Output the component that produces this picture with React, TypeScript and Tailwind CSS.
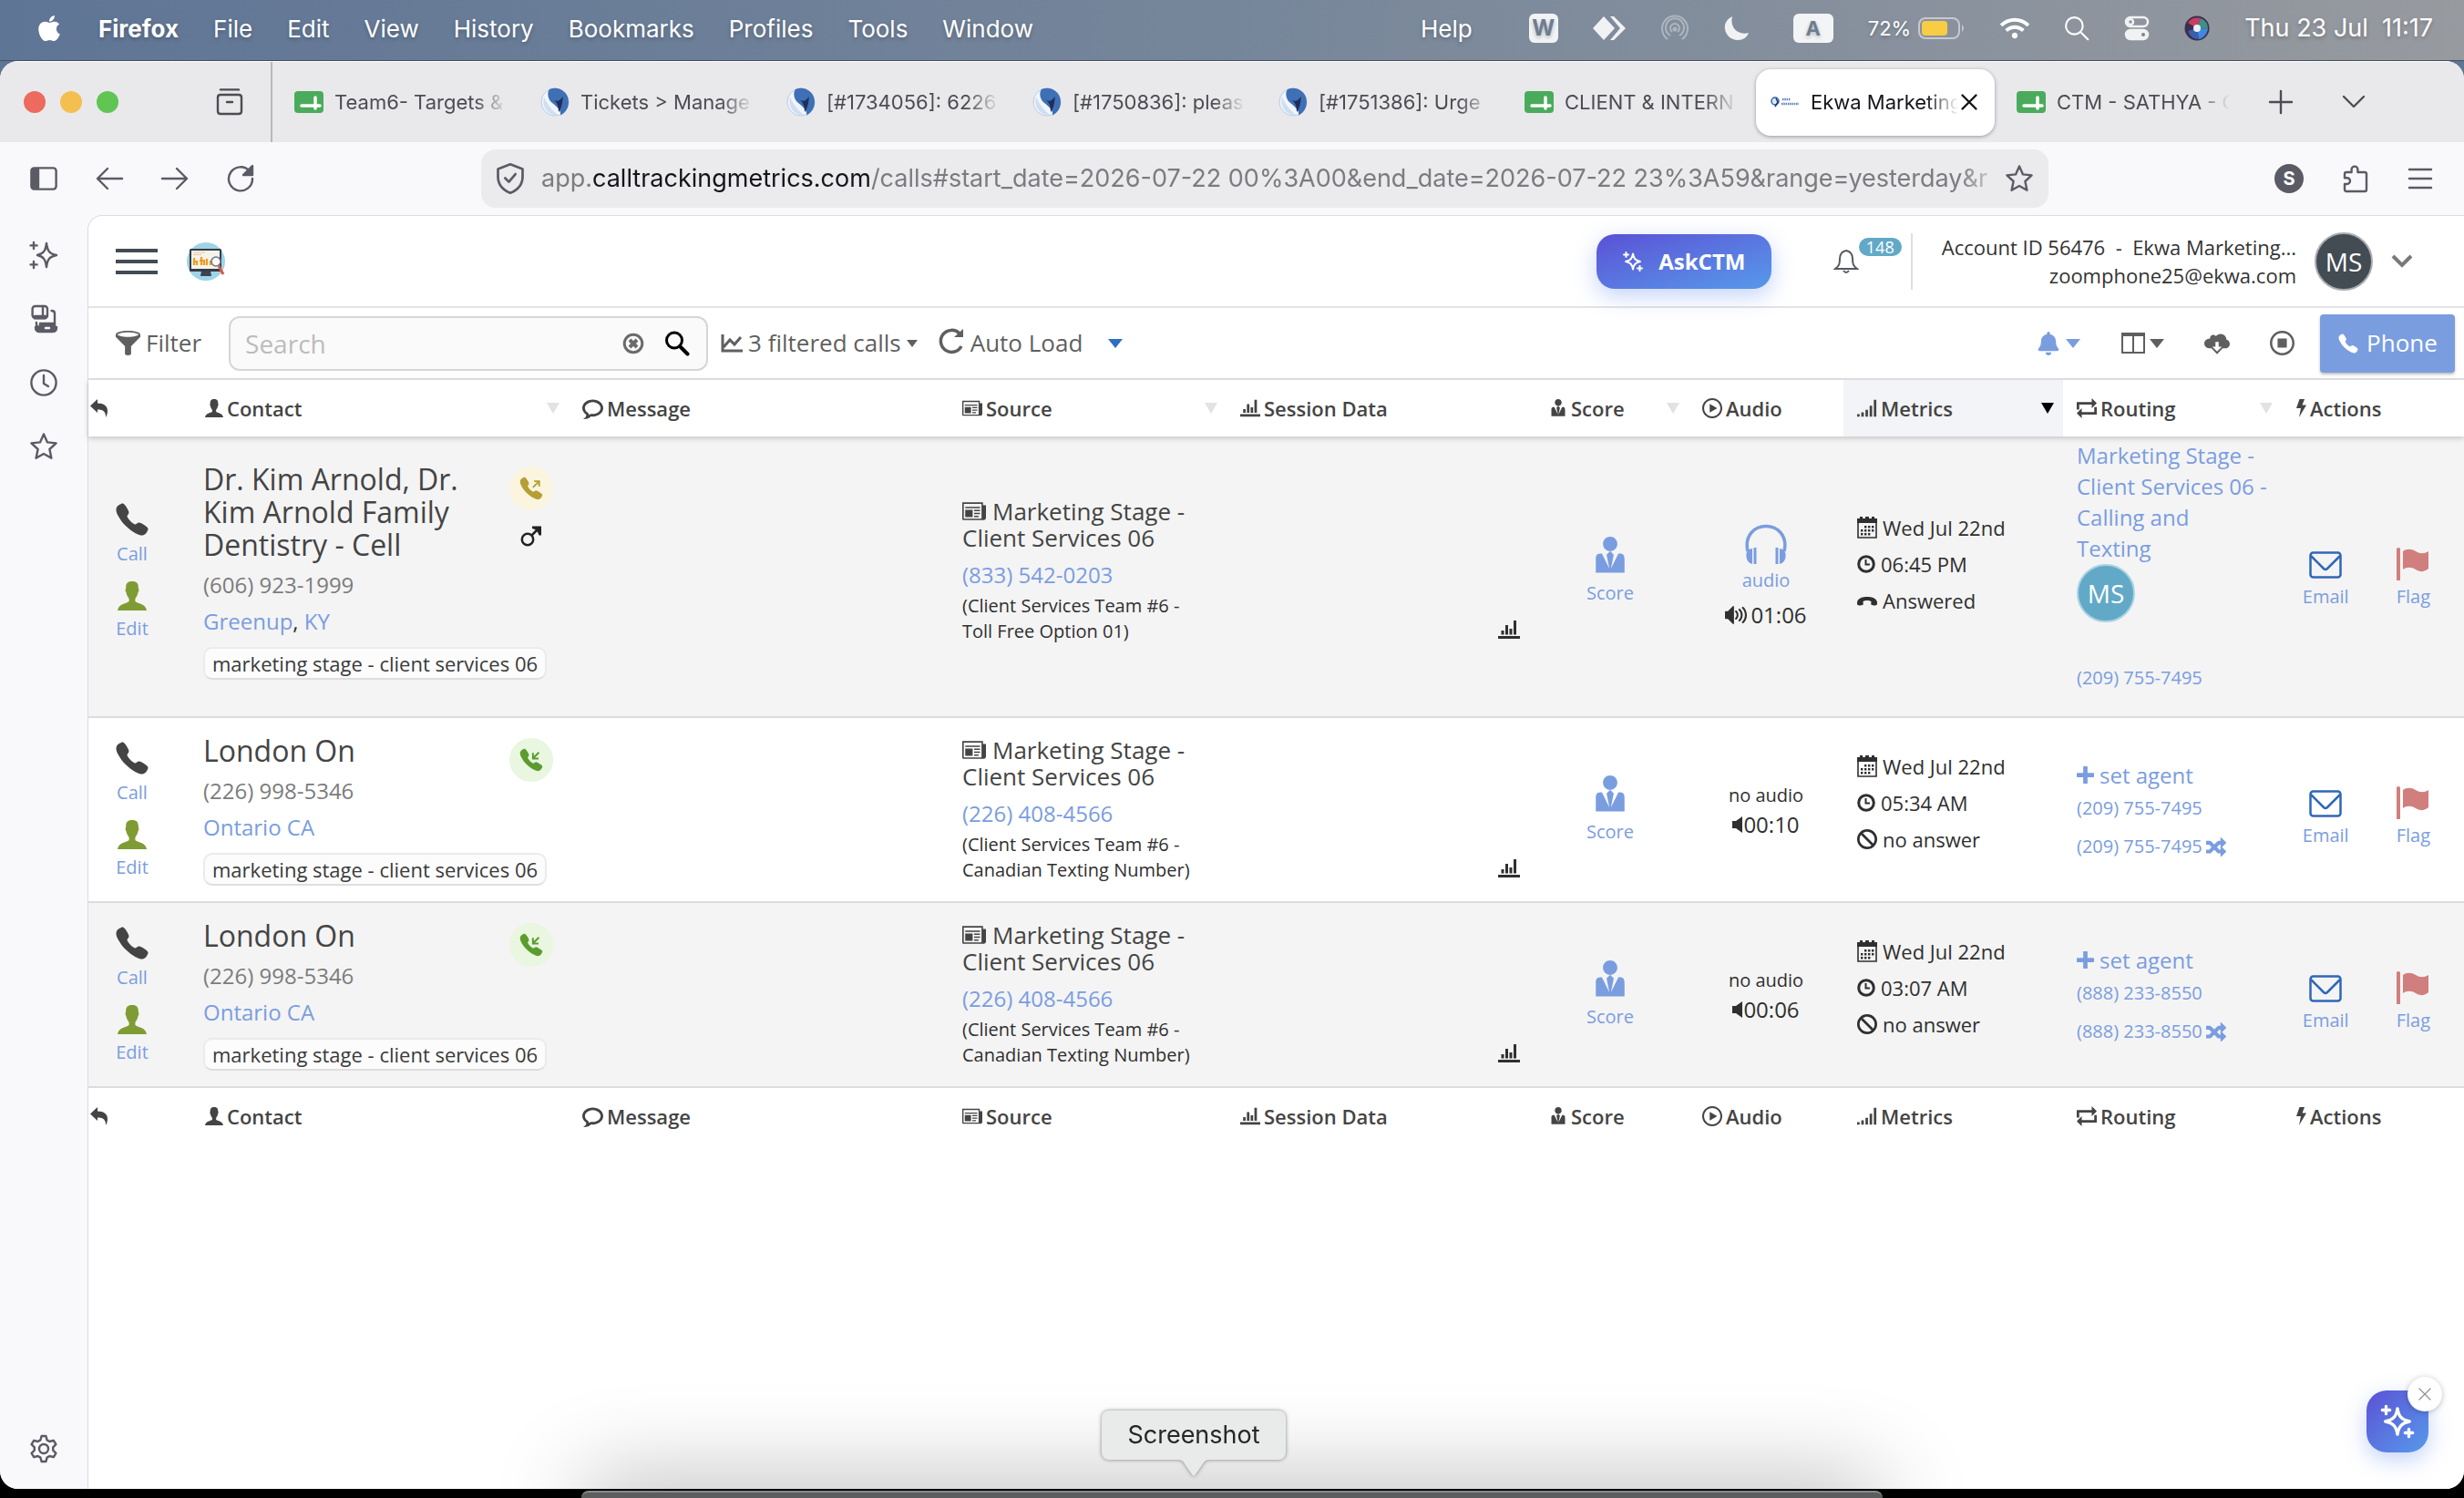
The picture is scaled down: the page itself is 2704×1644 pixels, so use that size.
import type { ReactNode } from 'react';
import {
  ImBlocked,
  ImBubble2,
  ImCloudDownload,
  ImFilter,
  ImLoop,
  ImNewspaper,
  ImPhoneHangUp,
  ImPlay2,
  ImPlus,
  ImShuffle,
  ImStop,
  ImUserTie,
  ImVolumeHigh,
} from 'react-icons/im';
import { IoCall } from 'react-icons/io5';
import { FaApple, FaBell, FaWifi } from 'react-icons/fa';

interface Call {
  id: number;
  name: string;
  phone: string;
  location: string[];
  direction: 'in' | 'out';
  male?: boolean;
  sourcePhone: string;
  sourceNote: string;
  audio: boolean;
  duration: string;
  time: string;
  answered: boolean;
  routing: string;
}

const calls: Call[] = [
  {
    id: 1,
    name: 'Dr. Kim Arnold, Dr. Kim Arnold Family Dentistry - Cell',
    phone: '(606) 923-1999',
    location: ['Greenup', 'KY'],
    direction: 'out',
    male: true,
    sourcePhone: '(833) 542-0203',
    sourceNote: '(Client Services Team #6 - Toll Free Option 01)',
    audio: true,
    duration: '01:06',
    time: '06:45 PM',
    answered: true,
    routing: '(209) 755-7495',
  },
  {
    id: 2,
    name: 'London On',
    phone: '(226) 998-5346',
    location: ['Ontario CA'],
    direction: 'in',
    sourcePhone: '(226) 408-4566',
    sourceNote: '(Client Services Team #6 - Canadian Texting Number)',
    audio: false,
    duration: '00:10',
    time: '05:34 AM',
    answered: false,
    routing: '(209) 755-7495',
  },
  {
    id: 3,
    name: 'London On',
    phone: '(226) 998-5346',
    location: ['Ontario CA'],
    direction: 'in',
    sourcePhone: '(226) 408-4566',
    sourceNote: '(Client Services Team #6 - Canadian Texting Number)',
    audio: false,
    duration: '00:06',
    time: '03:07 AM',
    answered: false,
    routing: '(888) 233-8550',
  },
];

const menus = ['File', 'Edit', 'View', 'History', 'Bookmarks', 'Profiles', 'Tools', 'Window'];

const tabs = [
  { title: 'Team6- Targets &', icon: 'sheet' },
  { title: 'Tickets > Manage', icon: 'ticket' },
  { title: '[#1734056]: 6226', icon: 'ticket' },
  { title: '[#1750836]: pleas', icon: 'ticket' },
  { title: '[#1751386]: Urge', icon: 'ticket' },
  { title: 'CLIENT & INTERN', icon: 'sheet' },
  { title: 'Ekwa Marketing', icon: 'ekwa', active: true },
  { title: 'CTM - SATHYA - C', icon: 'sheet' },
];

/* ---------- icons ---------- */

// 16-unit outline icon used all over the browser chrome
const Outline = ({ children, className = 'size-8' }: { children: ReactNode; className?: string }) => (
  <svg
    viewBox="0 0 16 16"
    className={className}
    fill="none"
    stroke="currentColor"
    strokeWidth="1.2"
    strokeLinecap="round"
    strokeLinejoin="round"
    aria-hidden="true"
  >
    {children}
  </svg>
);

const STAR = 'M8 1.2l2 4.5 4.8.5-3.6 3.3 1 4.9L8 12l-4.2 2.4 1-4.9L1.2 6.2 6 5.7z';

const Sparkle = ({ className = 'size-8' }: { className?: string }) => (
  <svg
    viewBox="0 0 24 24"
    className={className}
    fill="none"
    stroke="currentColor"
    strokeWidth="2"
    strokeLinecap="round"
    strokeLinejoin="round"
    aria-hidden="true"
  >
    <path d="M12 3.5c.8 5.2 2.6 7.4 8 8.5-5.4 1.1-7.2 3.3-8 8.5-.8-5.2-2.6-7.4-8-8.5 5.4-1.1 7.2-3.3 8-8.5zM4.500 2v5M2 4.500h5M19.500 17v5M17 19.500h5" />
  </svg>
);

const UserIcon = ({ className }: { className: string }) => (
  <svg viewBox="0 0 32 32" className={className} fill="currentColor" aria-hidden="true">
    <path d="M16 0c5.200 0 6.800 2.600 6.800 6.500 0 1.500.5 1.600.6 3 .1 1.300-.8 2-1 3.200-.5 3-2 4.500-3 6.300v3c2 2.200 11.600 2.500 12.600 10H0c1-7.500 10.600-7.800 12.600-10v-3c-1-1.800-2.500-3.300-3-6.300-.2-1.200-1.100-1.900-1-3.200.1-1.400.6-1.500.6-3C9.200 2.600 10.800 0 16 0z" />
  </svg>
);

const Bars = ({ className }: { className: string }) => (
  <svg viewBox="0 0 24 20" className={className} fill="currentColor" aria-hidden="true">
    <path d="M0 17h24v3H0zM3.500 11h3v4.500h-3zM8 5h3v10.500H8zM12.500 9h3v6.500h-3zM17 0h3v15.500h-3z" />
  </svg>
);

const Signal = ({ className }: { className: string }) => (
  <svg viewBox="0 0 24 20" className={className} fill="currentColor" aria-hidden="true">
    <path d="M0 17h3v3H0zM5 15h3v5H5zM10 12h3v8h-3zM15 7h3v13h-3zM20 0h3v20h-3z" />
  </svg>
);

const ReplyIcon = () => (
  <svg viewBox="0 0 20 20" className="size-5" fill="currentColor" role="img" aria-label="Direction">
    <path d="M0 7.500L8 0v4.500c7 0 11 3 11 8.500 0 3-.8 5-2 7 .3-6-2.500-8.500-9-8.500V15z" />
  </svg>
);

const BoltIcon = () => (
  <svg viewBox="0 0 12 20" className="h-5 w-3" fill="currentColor" aria-hidden="true">
    <path d="M4.500 0H10L7.500 6.500H12L4 20l2-10H1z" />
  </svg>
);

const ClockIcon = () => (
  <svg viewBox="0 0 20 20" className="size-5" fill="none" stroke="currentColor" strokeWidth="3" aria-hidden="true">
    <circle cx="10" cy="10" r="8.300" />
    <path d="M9.500 5v5.500H14" strokeWidth="2" />
  </svg>
);

const HeadphonesIcon = () => (
  <svg viewBox="0 0 46 46" className="size-[46px]" fill="none" stroke="currentColor" aria-hidden="true">
    <path d="M3 30C-1 12 11 2.500 23 2.500S47 12 43 30" strokeWidth="3.500" />
    <path d="M11 26v18M35 26v18" strokeWidth="3" />
    <path d="M8 27C2 28 1 32 1.500 36 2 40 4 43 8 44zM38 27c6 1 7 5 6.500 9-.5 4-2.500 7-6.500 8z" fill="currentColor" stroke="none" />
  </svg>
);

const SpeakerIcon = () => (
  <svg viewBox="0 0 12 18" className="h-[18px] w-3" fill="currentColor" aria-hidden="true">
    <path d="M0 5h4l7-5v18l-7-5H0z" />
  </svg>
);

const FlagIcon = () => (
  <svg viewBox="0 0 36 36" className="size-9 text-[#d17f7e]" fill="currentColor" aria-hidden="true">
    <path d="M0 1q2-2 4 0v35H0zM7 4c4-3 9-3 14 0s9 3 14 0v19c-5 4-9 4-14 1s-10-3-14 0z" />
  </svg>
);

const Calendar = () => (
  <svg viewBox="0 0 22 24" className="h-6 w-[22px]" aria-hidden="true">
    <path d="M1 4h20v19H1z" fill="none" stroke="currentColor" strokeWidth="1.600" />
    <path
      d="M0 2h3V0h3v2h3V0h4v2h3V0h3v2h3v5H0zM8 10h2.400v2.400H8zM12 10h2.400v2.400H12zM16 10h2.400v2.400H16zM4 14h2.400v2.400H4zM8 14h2.400v2.400H8zM12 14h2.400v2.400H12zM16 14h2.400v2.400H16zM4 18h2.400v2.400H4zM8 18h2.400v2.400H8zM12 18h2.400v2.400H12z"
      fill="currentColor"
    />
  </svg>
);

const Caret = ({ className }: { className: string }) => (
  <svg viewBox="0 0 14 12" preserveAspectRatio="none" className={className} fill="currentColor" aria-hidden="true">
    <path d="M0 0h14L7 12z" />
  </svg>
);

const Envelope = () => (
  <svg viewBox="0 0 36 30" className="h-[30px] w-9 text-[#2f67b8]" fill="none" stroke="currentColor" strokeWidth="2.500" aria-hidden="true">
    <rect x="1.500" y="1.500" width="33" height="27" rx="3" />
    <path d="M2 5l14 14q2 2 4 0L34 5" />
  </svg>
);

const DirectionBadge = ({ direction }: { direction: Call['direction'] }) => (
  <span
    className={`flex size-12 items-center justify-center rounded-full ${
      direction === 'out' ? 'bg-[#fbf5df] text-[#b59f35]' : 'bg-[#e9f6e0] text-[#5b9c2e]'
    }`}
  >
    <svg viewBox="0 0 512 512" className="size-7" aria-hidden="true">
      <path
        fill="currentColor"
        d="M391 480c-19.500 0-46.900-7.100-87.900-30-49.900-28-88.500-53.800-138.200-103.300C117 298.800 93.700 267.800 61 208.400c-36.900-67.200-30.600-102.400-23.600-117.500C45.700 73 58 62.300 73.900 51.700a176 176 0 0128.600-15.200c1-.4 1.900-.8 2.800-1.200 4.900-2.200 12.400-5.600 21.900-2 6.300 2.400 12 7.200 20.800 16 18.200 17.900 43 57.800 52.100 77.400 6.200 13.200 10.200 21.900 10.200 31.700 0 11.400-5.700 20.300-12.700 29.800-1.300 1.800-2.600 3.500-3.900 5.200-7.600 10-9.300 12.900-8.200 18 2.200 10.300 18.800 41.100 46.100 68.400 27.300 27.300 57.200 42.800 67.500 45 5.300 1.100 8.300-.6 18.600-8.500 1.500-1.100 3-2.300 4.600-3.500 10.700-8 19.100-13.500 30.300-13.500h.1c9.700 0 18 4.200 31.900 11.200 18 9.100 59.100 33.600 77.100 51.800 8.800 8.900 13.700 14.500 16.100 20.800 3.600 9.600.2 17-2 22-.4.900-.8 1.800-1.200 2.800a178 178 0 01-15.300 28.500c-10.600 15.800-21.400 28.100-39.300 36.500A67.400 67.400 0 01391 480z"
      />
      <path
        fill="none"
        stroke="currentColor"
        strokeWidth="36"
        d={direction === 'out' ? 'M290 235L400 125M310 112h105v105' : 'M410 105L300 215M290 115v112h112'}
      />
    </svg>
  </span>
);

const SheetIcon = () => (
  <svg viewBox="0 0 32 24" className="h-6 w-8 shrink-0" aria-hidden="true">
    <rect width="32" height="24" rx="4" fill="#4bab5d" />
    <path d="M8 16h20M23 7v12" stroke="#fff" strokeWidth="3.500" strokeLinecap="round" fill="none" />
  </svg>
);

const TicketIcon = () => (
  <svg viewBox="0 0 32 32" className="size-8 shrink-0" aria-hidden="true">
    <circle cx="16" cy="16" r="15" fill="#f2f6fc" stroke="#b6cbe6" />
    <path d="M10 2a15 15 0 0121 14c0 7-4 12-9 14.500C23 25 18 21 13 17 8 13 7 6 10 2z" fill="#3f70b5" />
    <path d="M15 14c5 2 6 0 10-4-1 6-1 12-5 17 0-5-1-10-5-13z" fill="#1f2f5c" />
    <path d="M4 10C7 18 12 24 19 30 9 31 1 22 4 10z" fill="#cfdff1" />
  </svg>
);

const EkwaIcon = () => (
  <svg viewBox="0 0 32 16" className="h-4 w-8 shrink-0" aria-hidden="true">
    <circle cx="5" cy="7" r="4" fill="#dfe8f5" stroke="#2f62ad" strokeWidth="1.500" />
    <path d="M6 4l2 4-3 5" stroke="#1f3767" fill="none" strokeWidth="1.500" />
    <path d="M13 5h9M12 10h19" stroke="#5f83bd" strokeWidth="2.500" strokeDasharray="1.500 .8" />
  </svg>
);

const tabIcons: Record<string, ReactNode> = {
  sheet: <SheetIcon />,
  ticket: <TicketIcon />,
  ekwa: <EkwaIcon />,
};

/* ---------- macOS menu bar ---------- */

const MenuBar = () => (
  <header className="flex h-[67px] shrink-0 items-center border-b border-[#45505f] bg-linear-to-r from-[#5f7595] via-[#76869a] to-[#979a9f] pr-[34px] pb-1 pl-[38px] text-[26px] text-white [text-shadow:0_2px_4px_rgba(0,0,0,0.25)]">
    <nav className="flex items-center gap-[38px]">
      <FaApple className="size-8" />
      <a href="#firefox" className="font-bold">
        Firefox
      </a>
      {menus.map((menu) => (
        <a key={menu} href="#menu">
          {menu}
        </a>
      ))}
    </nav>
    <div className="ml-auto flex items-center gap-[38px]">
      <a href="#help" className="mr-6">
        Help
      </a>
      <span className="flex size-8 items-center justify-center rounded-md bg-white/90 text-[24px] font-bold text-[#6e7d90]">W</span>
      <svg viewBox="0 0 36 28" className="h-7 w-9" fill="#f1f2f4" aria-hidden="true">
        <path d="M12 1l12 13-12 13L0 14zM19 1h4l13 13-13 13h-4l11-13z" />
      </svg>
      <svg viewBox="0 0 32 32" className="size-8 opacity-35" fill="none" stroke="#fff" strokeWidth="2" aria-hidden="true">
        <path d="M8 28a14 14 0 1116 0M11 24a10 10 0 1110 0M13 20a5 5 0 116 0" />
        <circle cx="16" cy="17" r="1.500" fill="#fff" />
      </svg>
      <svg viewBox="0 0 28 28" className="mr-2.5 size-7" fill="#f1f2f4" aria-hidden="true">
        <path d="M9 1C3 4 0 9 1 15c1 7 7 12 14 12 6 0 10-3 12-8C16 22 6 14 9 1z" />
      </svg>
      <span className="flex h-8 w-11 items-center justify-center rounded-md bg-white/90 text-[22px] font-bold text-[#6e7d90]">A</span>
      <span className="flex items-center gap-2 text-[22px]">
        72%
        <svg viewBox="0 0 52 24" className="h-6 w-[52px]" aria-hidden="true">
          <rect x="1" y="1" width="44" height="22" rx="7" fill="none" stroke="#c6c9cf" strokeWidth="2" />
          <rect x="4" y="4" width="28" height="16" rx="4" fill="#f8cd45" />
          <path d="M48 8q4 4 0 8z" fill="#c6c9cf" />
        </svg>
      </span>
      <FaWifi className="size-8" />
      <Outline className="size-7">
        <circle cx="6.500" cy="6.500" r="5.300" />
        <path d="M10.500 10.500l4.500 4.500" />
      </Outline>
      <svg viewBox="0 0 28 28" className="size-7" fill="none" stroke="#f1f2f4" strokeWidth="2.500" aria-hidden="true">
        <rect x="2" y="2" width="24" height="10" rx="5" />
        <circle cx="7" cy="7" r="3" />
        <rect x="2" y="16" width="24" height="10" rx="5" fill="#f1f2f4" />
        <circle cx="21" cy="21" r="2" fill="#7b8593" stroke="none" />
      </svg>
      <svg viewBox="0 0 28 28" className="size-7" aria-hidden="true">
        <circle cx="14" cy="14" r="13.500" fill="#3b2f4d" />
        <path d="M14 14L4 8Q9 1 18 3z" fill="#c93d63" />
        <path d="M14 14L18 3q8 3 8 12z" fill="#3f8f88" />
        <path d="M14 14l12 1q-2 9-10 11z" fill="#3f8ae0" />
        <path d="M14 14l2 12Q7 26 4 17z" fill="#3a5fae" />
        <circle cx="14" cy="14" r="4" fill="#e9f1fa" />
      </svg>
      <span className="text-[27px] whitespace-pre">Thu 23 Jul  11:17</span>
    </div>
  </header>
);

/* ---------- Firefox chrome ---------- */

const TabBar = () => (
  <div className="flex h-[89px] items-center border-t border-white bg-[#e9e9eb] text-[22px] text-[#4c4c52]">
    <div className="flex w-[297px] shrink-0 items-center pr-[29px] pl-[26px]">
      <div className="flex gap-4">
        <span className="size-6 rounded-full bg-[#ec6a5e]" />
        <span className="size-6 rounded-full bg-[#f4bf4f]" />
        <span className="size-6 rounded-full bg-[#61c554]" />
      </div>
      <button type="button" aria-label="Recent browsing" className="ml-auto">
        <Outline>
          <path d="M3 1.200h10M1.500 5.500q0-1.500 1.500-1.500h10q1.500 0 1.500 1.500V13q0 1.500-1.500 1.500H3Q1.500 14.500 1.500 13zM6.500 8h3" />
        </Outline>
      </button>
    </div>
    <span className="h-full w-0.5 shrink-0 bg-[#b9b9bd]" />
    <div className="flex items-center gap-2 pl-2">
      {tabs.map((tab) => (
        <div
          key={tab.title}
          className={`flex h-[73px] w-[262px] items-center gap-3 pr-3 pl-4 ${
            tab.active ? 'rounded-2xl bg-white text-[#15141a] shadow-[0_1px_4px_rgba(0,0,0,0.35)]' : ''
          }`}
        >
          {tabIcons[tab.icon]}
          <a
            href="#tab"
            className="min-w-0 flex-1 overflow-hidden whitespace-nowrap [mask-image:linear-gradient(to_left,transparent,black_36px)]"
          >
            {tab.title}
          </a>
          {tab.active && (
            <button type="button" aria-label="Close tab" className="mr-1 -ml-3">
              <Outline className="size-6">
                <path d="M3 3l10 10M13 3L3 13" strokeWidth="1.600" />
              </Outline>
            </button>
          )}
        </div>
      ))}
    </div>
    <button type="button" aria-label="New tab" className="ml-7">
      <Outline>
        <path d="M8 2v12M2 8h12" />
      </Outline>
    </button>
    <button type="button" aria-label="List all tabs" className="ml-12">
      <Outline>
        <path d="M2.500 5L8 10.500 13.500 5" />
      </Outline>
    </button>
  </div>
);

const NavBar = () => (
  <div className="flex h-20 items-center bg-[#f9f9fb] pr-8 pl-8 text-[#5b5b66]">
    <div className="flex w-[496px] shrink-0 items-center gap-10">
      <button type="button" aria-label="Toggle sidebar">
        <Outline>
          <rect x="1.200" y="2.200" width="13.600" height="11.600" rx="1.500" />
          <path d="M2 3h3v10H2z" fill="currentColor" />
        </Outline>
      </button>
      <button type="button" aria-label="Back">
        <Outline>
          <path d="M15 8H1.500M7 2.500L1.500 8 7 13.500" />
        </Outline>
      </button>
      <button type="button" aria-label="Forward">
        <Outline>
          <path d="M1 8h13.500M9 2.500L14.500 8 9 13.500" />
        </Outline>
      </button>
      <button type="button" aria-label="Reload">
        <Outline>
          <path d="M14.500 8A6.500 6.500 0 1113 4" />
          <path d="M14.500 1v5h-5z" fill="currentColor" />
        </Outline>
      </button>
    </div>
    <div className="flex h-16 min-w-0 flex-1 items-center gap-4 rounded-2xl bg-[#ebebed] pr-4 pl-[14px]">
      <Outline className="size-9 shrink-0">
        <path d="M8 1l6 2.300v3.700c0 4-2.500 6.600-6 8-3.500-1.400-6-4-6-8V3.300zM5.500 7.800L7.300 9.600l3.200-3.800" />
      </Outline>
      <p className="flex-1 overflow-hidden text-[27px] whitespace-nowrap text-[#7b7b80] [mask-image:linear-gradient(to_left,transparent,black_50px)]">
        app.<span className="text-[#15141a]">calltrackingmetrics.com</span>
        /calls#start_date=2026-07-22 00%3A00&amp;end_date=2026-07-22 23%3A59&amp;range=yesterday&amp;r
      </p>
      <button type="button" aria-label="Bookmark this page" className="-ml-4">
        <Outline>
          <path d={STAR} />
        </Outline>
      </button>
    </div>
    <div className="ml-[248px] flex items-center gap-10">
      <button type="button" className="flex size-8 items-center justify-center rounded-full bg-[#5b5b66] text-[20px] font-bold text-white">
        S
      </button>
      <button type="button" aria-label="Extensions">
        <Outline>
          <path d="M6.300 4.500V3a1.700 1.700 0 013.400 0v1.500h3.800q1 0 1 1V14q0 1-1 1h-10q-1 0-1-1v-3h1.300a1.700 1.700 0 000-3.400H2.500V5.500q0-1 1-1z" />
        </Outline>
      </button>
      <button type="button" aria-label="Menu">
        <Outline>
          <path d="M2 3h12M2 8h12M2 13h12" />
        </Outline>
      </button>
    </div>
  </div>
);

const Sidebar = () => (
  <aside className="flex w-24 shrink-0 flex-col items-center gap-[38px] bg-[#f9f9fb] pt-7 pb-7 text-[#5b5b66]">
    <button type="button" aria-label="Assistant">
      <Outline>
        <path d="M9.500 1.500c.5 4 1.500 5.700 5.500 6.500-4 .8-5 2.500-5.500 6.500C9 10.500 8 8.800 4.500 8 8 7.200 9 5.500 9.500 1.500zM2.500 1v3.500M.8 2.700h3.500M2.500 11.500V15M.8 13.200h3.500" />
      </Outline>
    </button>
    <button type="button" aria-label="Synced tabs">
      <Outline>
        <rect x="1.800" y="1" width="8.200" height="6.500" rx="1.500" />
        <path d="M7.500 1v6M12.300 3.500q1.700 0 1.700 1.500v5.500M4 10v1q0 1.500 1.500 1.500H7" />
        <path d="M3 6.500h7L9 7.600H3zM3.500 12.500h11.500q0 2.500-2 2.500H5.500q-2 0-2-2.500zM6 10.500h8v2H6z" fill="currentColor" />
        <path d="M9 13h2" stroke="#f9f9fb" />
      </Outline>
    </button>
    <button type="button" aria-label="History">
      <Outline>
        <circle cx="8" cy="8" r="6.800" />
        <path d="M8 4v4.500l2.500 1.500" />
      </Outline>
    </button>
    <button type="button" aria-label="Bookmarks">
      <Outline>
        <path d={STAR} />
      </Outline>
    </button>
    <button type="button" aria-label="Settings" className="mt-auto">
      <Outline>
        <circle cx="8" cy="8" r="2.500" />
        <path d="M6.800 1h2.400l.6 2.200 1.400.8 2.200-.6 1.300 2.200L13.100 7.200v1.600l1.600 1.600-1.300 2.200-2.200-.6-1.400.8-.6 2.200H6.800l-.6-2.200-1.400-.8-2.200.6-1.300-2.200 1.600-1.600V7.200L1.300 5.600l1.300-2.200 2.200.6 1.400-.8z" />
      </Outline>
    </button>
  </aside>
);

/* ---------- CallTrackingMetrics page ---------- */

const Logo = () => (
  <svg viewBox="0 0 42 44" className="h-11 w-[42px]" aria-hidden="true">
    <circle cx="21" cy="22" r="21" fill="#9fd3e6" />
    <path d="M16 32h10l1 6H15z" fill="#3d4350" />
    <rect x="3" y="8" width="35" height="25" rx="1.500" fill="#353c49" />
    <rect x="5" y="10" width="31" height="20" fill="#f6f3ea" />
    <path d="M7 12h13M7 14.500h9" stroke="#f0c79a" />
    <path d="M8 26v-8M8 22h3v4M16 26v-9M14 21h5v5M22 26v-7M26 26v-5" stroke="#f29b1d" strokeWidth="2.200" fill="none" />
    <circle cx="32" cy="22" r="5" fill="#fff" fillOpacity=".6" stroke="#6a7482" strokeWidth="1.500" />
    <path d="M35 27l5 9" stroke="#d8583e" strokeWidth="3" />
  </svg>
);

const PageHeader = () => (
  <div className="flex h-[101px] items-center border-b-2 border-[#e4e4e4] pr-14 pl-[30px]">
    <button type="button" aria-label="Toggle menu" className="flex w-[46px] flex-col gap-2">
      <span className="h-1 bg-[#434b53]" />
      <span className="h-1 bg-[#434b53]" />
      <span className="h-1 bg-[#434b53]" />
    </button>
    <a href="#home" aria-label="Home" className="ml-8">
      <Logo />
    </a>
    <button
      type="button"
      className="ml-auto flex h-[60px] w-48 items-center justify-center gap-4 rounded-[20px] bg-linear-to-br from-[#5a50d5] to-[#5699ea] text-[24px] font-bold text-white shadow-[0_8px_24px_rgba(86,130,234,0.35)]"
    >
      <Sparkle className="size-6" />
      AskCTM
    </button>
    <button type="button" className="ml-[68px] flex items-center text-[18px] text-white">
      <svg viewBox="0 0 28 28" className="size-7 text-[#55595e]" fill="none" stroke="currentColor" strokeWidth="2" aria-hidden="true">
        <path d="M14 2c5 1 7 4 7 9 0 6 1 8 5 11H2c4-3 5-5 5-11 0-5 2-8 7-9zM11 24q3 4 6 0" />
      </svg>
      <span className="mb-8 rounded-full bg-[#62a9c7] px-2 leading-5">148</span>
    </button>
    <div className="ml-[10px] border-l-2 border-[#dcdfe3] pl-8 text-right text-[22px] leading-[31px] text-[#333]">
      <p className="whitespace-pre">Account ID 56476  -  Ekwa Marketing...</p>
      <p>zoomphone25@ekwa.com</p>
    </div>
    <span className="ml-5 flex size-16 items-center justify-center rounded-full border-2 border-[#a9adb1] bg-[#434b53] text-[28px] text-white">
      MS
    </span>
    <button type="button" aria-label="Account menu" className="ml-5 text-[#77797c]">
      <svg viewBox="0 0 24 16" className="h-4 w-6" fill="none" stroke="currentColor" strokeWidth="4" aria-hidden="true">
        <path d="M2 2l10 10L22 2" />
      </svg>
    </button>
  </div>
);

const Toolbar = () => (
  <div className="flex h-[79px] items-center border-b-2 border-[#e4e4e4] pr-2.5 pl-[30px] text-[26px] text-[#5f5f5f]">
    <button type="button" className="flex items-center gap-1.5">
      <ImFilter className="size-[27px]" />
      Filter
    </button>
    <div className="ml-[30px] flex h-[60px] w-[526px] items-center rounded-xl border-2 border-[#d6d6d6] bg-[#fafafa] pr-[18px] pl-4">
      <input
        type="text"
        aria-label="Search"
        placeholder="Search"
        className="min-w-0 flex-1 text-[28px] outline-none placeholder:text-[#bcbcbc]"
      />
      <button type="button" aria-label="Clear search">
        <svg viewBox="0 0 24 24" className="size-6 text-[#6b6b6b]" fill="none" stroke="currentColor" aria-hidden="true">
          <circle cx="12" cy="12" r="9.800" strokeWidth="3" />
          <path d="M8 8l8 8M16 8l-8 8" strokeWidth="4" />
        </svg>
      </button>
      <button type="button" aria-label="Run search" className="ml-[22px] text-black">
        <svg viewBox="0 0 28 28" className="size-7" fill="none" stroke="currentColor" aria-hidden="true">
          <circle cx="11" cy="10.500" r="8.500" strokeWidth="3" />
          <path d="M17 17l8.500 8.500" strokeWidth="4" strokeLinecap="round" />
        </svg>
      </button>
    </div>
    <button type="button" className="ml-[14px] flex items-center gap-1.5">
      <svg viewBox="0 0 24 20" className="h-5 w-6" fill="none" stroke="currentColor" strokeWidth="3" aria-hidden="true">
        <path d="M2 0v18h22M3 14l7-8 5 5 7-8" />
      </svg>
      3 filtered calls
      <Caret className="h-2 w-3" />
    </button>
    <button type="button" className="ml-[22px] flex items-center gap-1.5">
      <svg viewBox="0 0 30 30" className="mb-1 size-[30px]" fill="none" stroke="currentColor" strokeWidth="3.500" aria-hidden="true">
        <path d="M26 20A12 12 0 1124 6" />
        <path d="M18 10h10V1z" fill="currentColor" stroke="none" />
      </svg>
      Auto Load
    </button>
    <button type="button" aria-label="Auto load options" className="ml-7 text-[#2f6fc0]">
      <Caret className="h-2.5 w-4" />
    </button>
    <div className="ml-auto flex items-center">
      <button type="button" aria-label="Alerts" className="flex items-center gap-1.5 text-[#7a9de0]">
        <FaBell className="size-[26px]" />
        <Caret className="h-2.5 w-4" />
      </button>
      <button type="button" aria-label="Columns" className="ml-11 flex items-center gap-1">
        <svg viewBox="0 0 28 24" className="h-6 w-7" fill="none" stroke="currentColor" strokeWidth="2" aria-hidden="true">
          <path d="M2 1h24v21H2zM2 3h24M14 3v19" />
        </svg>
        <Caret className="h-2.5 w-4" />
      </button>
      <button type="button" aria-label="Export" className="ml-11">
        <ImCloudDownload className="size-7" />
      </button>
      <button type="button" aria-label="Stop" className="ml-11">
        <ImStop className="size-[27px]" />
      </button>
      <button
        type="button"
        className="ml-7 flex h-16 w-[148px] items-center justify-center gap-2 rounded bg-[#7a9de0] text-white shadow-[0_2px_3px_rgba(0,0,0,0.25)]"
      >
        <IoCall className="size-6" />
        Phone
      </button>
    </div>
  </div>
);

interface Column {
  label: string;
  icon: ReactNode;
  sort?: 'idle' | 'active';
}

const columns: Column[] = [
  { label: 'Contact', icon: <UserIcon className="size-5" />, sort: 'idle' },
  { label: 'Message', icon: <ImBubble2 className="size-[23px]" /> },
  { label: 'Source', icon: <ImNewspaper className="size-[22px]" />, sort: 'idle' },
  { label: 'Session Data', icon: <Bars className="h-5 w-[22px]" /> },
  { label: 'Score', icon: <ImUserTie className="size-5" />, sort: 'idle' },
  { label: 'Audio', icon: <ImPlay2 className="size-[22px]" /> },
  { label: 'Metrics', icon: <Signal className="h-5 w-[22px]" />, sort: 'active' },
  { label: 'Routing', icon: <ImLoop className="size-[22px]" />, sort: 'idle' },
  { label: 'Actions', icon: <BoltIcon /> },
];

const HeaderCells = ({ sortable = false }: { sortable?: boolean }) => (
  <>
    <th className="pl-0.5 text-left">
      <ReplyIcon />
    </th>
    {columns.map((column) => (
      <th
        key={column.label}
        className={`pr-2.5 pl-[15px] font-semibold ${sortable && column.sort === 'active' ? 'bg-[#f3f4f7]' : ''}`}
      >
        <span className="flex items-center gap-1">
          {column.icon}
          {column.label}
          {sortable && column.sort && (
            <Caret className={`ml-auto h-3 w-[14px] ${column.sort === 'active' ? 'text-black' : 'text-[#e2e2e2]'}`} />
          )}
        </span>
      </th>
    ))}
  </>
);

const CallRow = ({ call }: { call: Call }) => {
  const cell = call.audio ? 'pb-3' : '';
  return (
    <tr className={`border-b-2 border-[#dcdcdc] odd:bg-[#f4f4f4] ${call.audio ? 'h-[308px]' : 'h-[203px]'}`}>
      <td className={cell}>
        <div className="flex w-24 flex-col items-center text-[20px] leading-7 text-[#7a9de0]">
          <a href="#call" className="flex flex-col items-center gap-1">
            <IoCall className="size-10 text-[#444]" />
            Call
          </a>
          <a href="#edit" className="mt-4 flex flex-col items-center gap-1.5">
            <UserIcon className="size-8 text-[#7f9c34]" />
            Edit
          </a>
        </div>
      </td>
      <td className={`pr-[17px] pl-[13px] ${cell}`}>
        <div className="flex justify-between">
          <div className="w-[310px]">
            <h3 className="text-[32px] leading-9 text-[#444]">{call.name}</h3>
            <p className="mt-1.5 text-[24px] leading-10 text-[#7c7c7c]">{call.phone}</p>
            <p className="text-[24px] leading-10">
              {call.location.map((place, i) => (
                <span key={place}>
                  {i > 0 && ', '}
                  <a href="#place" className="text-[#7a9de0]">
                    {place}
                  </a>
                </span>
              ))}
            </p>
          </div>
          <div className="flex flex-col items-center gap-4 pt-1">
            <DirectionBadge direction={call.direction} />
            {call.male && (
              <svg viewBox="0 0 24 24" className="size-6 text-[#222]" fill="none" stroke="currentColor" strokeWidth="2.500" role="img" aria-label="Male">
                <circle cx="8" cy="16" r="6.200" />
                <path d="M12.500 11.500l7-7" strokeWidth="2.500" />
                <path d="M13 1.500h10v10h-2.500L19 8l-3-3-3-1z" fill="currentColor" stroke="none" />
              </svg>
            )}
          </div>
        </div>
        <span className="mt-2 inline-block h-9 rounded-[10px] border-2 border-[#ebebeb] border-b-[#dedede] bg-[#fcfcfc] px-2 align-top text-[22px] leading-8 whitespace-nowrap text-[#3a3a3a]">
          marketing stage - client services 06
        </span>
      </td>
      <td />
      <td className={`px-[15px] ${cell}`}>
        <p className="w-[260px] text-[26px] leading-[29px] text-[#444]">
          <ImNewspaper className="-mt-1.5 mr-[7px] inline size-[26px]" />
          Marketing Stage - Client Services 06
        </p>
        <a href="#source" className="mt-1.5 block text-[24px] leading-10 text-[#7a9de0]">
          {call.sourcePhone}
        </a>
        <p className="w-[260px] text-[20px] leading-7">{call.sourceNote}</p>
      </td>
      <td className={`pr-[17px] ${cell}`}>
        <div className="flex h-[148px] items-end justify-end">
          <Bars className="h-5 w-6" />
        </div>
      </td>
      <td className={cell}>
        <a href="#score" className="flex flex-col items-center gap-1.5 pr-1 text-[20px] leading-7 text-[#7a9de0]">
          <ImUserTie className="size-[42px]" />
          Score
        </a>
      </td>
      <td>
        <div className="flex flex-col items-center text-[20px]">
          {call.audio ? (
            <a href="#audio" className="flex flex-col items-center gap-0.5 leading-7 text-[#7a9de0]">
              <HeadphonesIcon />
              audio
            </a>
          ) : (
            <span className="leading-8">no audio</span>
          )}
          <span className={`flex items-center text-[24px] leading-8 ${call.audio ? 'mt-2 gap-1' : ''}`}>
            {call.audio ? <ImVolumeHigh className="size-6" /> : <SpeakerIcon />}
            {call.duration}
          </span>
        </div>
      </td>
      <td className={`px-[15px] text-[22px] leading-10 ${call.audio ? 'pb-7' : 'pb-4'}`}>
        <p className="flex items-center gap-1.5">
          <Calendar />
          Wed Jul 22nd
        </p>
        <p className="flex items-center gap-1.5">
          <ClockIcon />
          {call.time}
        </p>
        <p className="flex items-center gap-1.5">
          {call.answered ? <ImPhoneHangUp className="size-[22px]" /> : <ImBlocked className="size-[22px]" />}
          {call.answered ? 'Answered' : 'no answer'}
        </p>
      </td>
      <td className={`px-[15px] text-[#7a9de0] ${call.audio ? 'pt-1 align-top' : ''}`}>
        {call.audio ? (
          <>
            <a href="#agent" className="block text-[24px] leading-[34px]">
              Marketing Stage - Client Services 06 - Calling and Texting
            </a>
            <span className="flex size-16 items-center justify-center rounded-full border-2 border-[#a9d3e2] bg-[#62a9c7] text-[28px] text-white">
              MS
            </span>
            <a href="#route" className="mt-11 block text-[20px] leading-[34px]">
              {call.routing}
            </a>
          </>
        ) : (
          <>
            <a href="#agent" className="flex items-center gap-1.5 text-[24px] leading-9">
              <ImPlus className="size-[19px]" />
              set agent
            </a>
            <a href="#route" className="block text-[20px] leading-9">
              {call.routing}
            </a>
            <a href="#route" className="mt-2 flex items-center gap-1 text-[20px] leading-8">
              {call.routing}
              <ImShuffle className="size-[22px] stroke-current stroke-1" />
            </a>
          </>
        )}
      </td>
      <td className={cell}>
        <div className="flex justify-end gap-[52px] pt-4 pr-[37px] text-[20px] leading-7 text-[#7a9de0]">
          <a href="#email" className="flex flex-col items-center justify-end gap-1.5">
            <Envelope />
            Email
          </a>
          <a href="#flag" className="flex flex-col items-center gap-1">
            <FlagIcon />
            Flag
          </a>
        </div>
      </td>
    </tr>
  );
};

const CallTable = () => (
  <table className="w-full table-fixed border-collapse text-[#2f2f2f]">
    <colgroup>
      <col className="w-[113px]" />
      <col className="w-[414px]" />
      <col />
      <col className="w-[305px]" />
      <col className="w-[339px]" />
      <col className="w-[168px]" />
      <col className="w-[170px]" />
      <col className="w-[241px]" />
      <col className="w-[240px]" />
      <col className="w-[200px]" />
    </colgroup>
    <thead className="relative shadow-[0_2px_6px_rgba(0,0,0,0.2)]">
      <tr className="h-[62px] text-[22px] text-[#444]">
        <HeaderCells sortable />
      </tr>
    </thead>
    <tbody>
      {calls.map((call) => (
        <CallRow key={call.id} call={call} />
      ))}
    </tbody>
    <tfoot>
      <tr className="h-[63px] text-[22px] text-[#444]">
        <HeaderCells />
      </tr>
    </tfoot>
  </table>
);

export default function App() {
  return (
    <div className="relative flex min-h-screen flex-col overflow-hidden bg-black font-['Inter',sans-serif]">
      <MenuBar />
      <div className="flex flex-1 flex-col bg-linear-to-b from-[#5f7595] from-5% to-black to-20% pb-2.5">
        <div className="relative flex flex-1 flex-col overflow-hidden rounded-[20px] bg-[#f9f9fb]">
          <TabBar />
          <NavBar />
          <div className="flex flex-1">
            <Sidebar />
            <main className="min-w-0 flex-1 rounded-tl-2xl border-t border-l border-[#dcdce0] bg-white font-['Open_Sans',sans-serif]">
              <PageHeader />
              <Toolbar />
              <CallTable />
            </main>
          </div>

          {/* shadow thrown by the dock */}
          <div className="absolute bottom-0 left-1/2 h-14 w-[1400px] -translate-x-[700px] translate-y-14 shadow-[0_0_100px_10px_rgba(0,0,0,0.28)]" />

          <button
            type="button"
            aria-label="Open AskCTM"
            className="absolute right-[39px] bottom-10 flex size-[68px] items-center justify-center rounded-[22px] bg-linear-to-br from-[#5a50d5] to-[#5699ea] text-white shadow-[0_8px_24px_rgba(86,130,234,0.35)]"
          >
            <Sparkle className="size-10" />
          </button>
          <button
            type="button"
            aria-label="Dismiss"
            className="absolute right-6 bottom-[85px] flex size-[38px] items-center justify-center rounded-full bg-white text-[#8b8f96] shadow-[0_1px_6px_rgba(0,0,0,0.25)]"
          >
            <Outline className="size-4">
              <path d="M2 2l12 12M14 2L2 14" />
            </Outline>
          </button>
        </div>
      </div>

      {/* dock edge and its label */}
      <div className="absolute bottom-0 left-1/2 h-2 w-[1428px] -translate-x-[714px] rounded-t-2xl border-t-2 border-[#8a8a88] bg-[#5c5d5e]" />
      <div className="absolute bottom-6 left-1/2 flex w-[202px] -translate-x-[143px] flex-col items-center drop-shadow-[0_0_2px_rgba(0,0,0,0.45)]">
        <span className="flex h-[54px] w-full items-center justify-center rounded-lg bg-[#e9ebea] text-[27px] text-[#262626]">
          Screenshot
        </span>
        <svg viewBox="0 0 32 18" className="h-[18px] w-8" fill="#e9ebea" aria-hidden="true">
          <path d="M0 0h32q-4 0-7 6l-7 10q-2 3-4 0L7 6Q4 0 0 0z" />
        </svg>
      </div>
    </div>
  );
}
